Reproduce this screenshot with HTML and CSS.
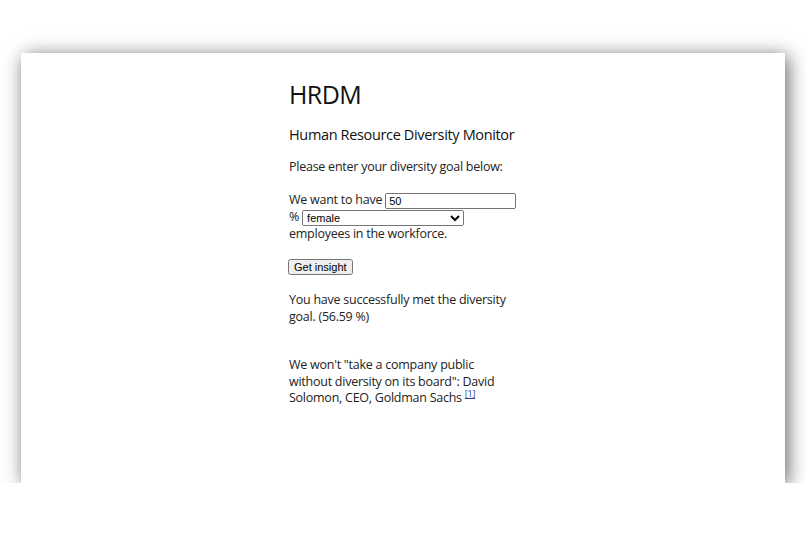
FILE: index.html
```html
<!DOCTYPE html>
<html lang="en">
<head>
  <meta charset="UTF-8" />
  <meta name="viewport" content="width=device-width, initial-scale=1" />
  <title>HRDM</title>
  <link rel="stylesheet" href="styles.css">
</head>
<body>
  <div class="page">
    <div class="content">
      <h1>HRDM</h1>
      <h2>Human Resource Diversity Monitor</h2>
      <p>Please enter your diversity goal below:</p>

      <form class="goal-form" onsubmit="return false;">
        We want to have <input type="text" class="goal-input" value="50" /><br>
        % <select class="goal-select">
          <option>female</option>
          <option>male</option>
        </select><br>
        employees in the workforce.
        <button type="submit" class="insight-btn">Get insight</button>
      </form>

      <p class="result">You have successfully met the diversity goal. (56.59 %)</p>

      <p class="quote">We won't "take a company public without diversity on its board": David Solomon, CEO, Goldman Sachs <sup><a href="#">[1]</a></sup></p>
    </div>
  </div>
</body>
</html>
```

FILE: styles.css
```css
body {
  font-family: "Open Sans", sans-serif;
  background: #fff;
  color: #222;
  margin: 0;
  padding: 0;
}
.page {
  margin: 53px 21px 0 21px;
  height: 430px;
  background: #fff;
  box-shadow: 3px 3px 18px rgba(0, 0, 0, 0.6);
}
.content {
  width: 228px;
  margin: 0 auto;
  padding-top: 24px;
  font-size: 12.5px;
  letter-spacing: -0.25px;
  line-height: 17px;
}
h1 {
  font-size: 25px;
  font-weight: 500;
  letter-spacing: -0.6px;
  margin: 0 0 14px;
  line-height: 34px;
  color: #111;
}
h2 {
  font-size: 14.5px;
  font-weight: 500;
  letter-spacing: -0.35px;
  margin: 0 0 13px;
  line-height: 20px;
  color: #111;
}
p {
  margin: 0 0 16px;
}
.goal-form {
  margin-bottom: 16px;
}
.goal-form input,
.goal-form select,
.goal-form button {
  font-family: Arial, sans-serif;
  font-size: 11px;
  letter-spacing: 0;
  vertical-align: middle;
  box-sizing: border-box;
  height: 16px;
  margin: -1px 0;
}
.goal-input {
  width: 131px;
  padding: 0 2px;
}
.goal-select {
  width: 162px;
  padding: 0;
}
.goal-form .insight-btn {
  display: block;
  white-space: nowrap;
  padding: 0 4px;
  margin: 17px 0 0 -1px;
}
.quote {
  margin-top: 32px;
  line-height: 16.5px;
}
sup {
  font-size: 9px;
  line-height: 0;
}
sup a {
  color: #2b3f9e;
}
```
